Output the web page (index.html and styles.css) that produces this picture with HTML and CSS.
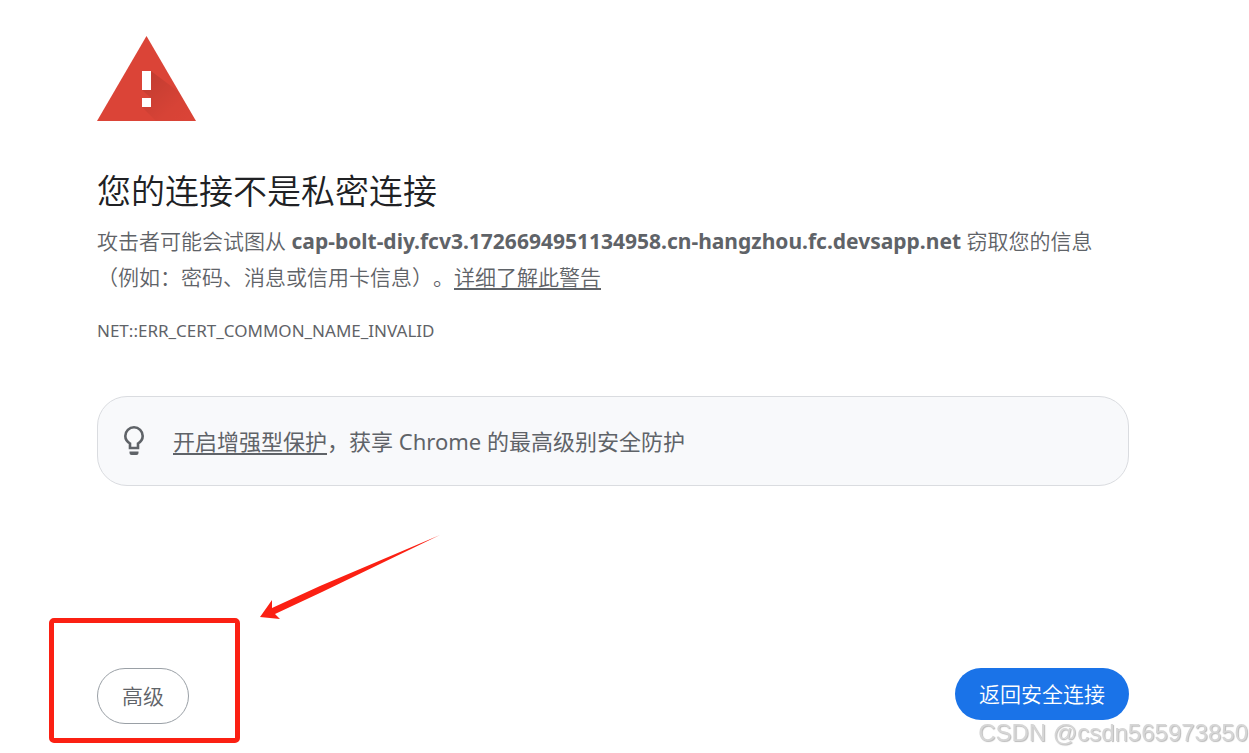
FILE: index.html
```html
<!DOCTYPE html>
<html lang="zh-CN">
<head>
<meta charset="utf-8">
<meta name="viewport" content="width=device-width, initial-scale=1">
<title>隐私设置错误</title>
<link rel="stylesheet" href="styles.css">
</head>
<body>
<main class="page">
  <svg class="warning-icon" viewBox="0 0 100 86" aria-hidden="true">
    <defs>
      <linearGradient id="shade" x1="0" y1="0" x2="1" y2="1">
        <stop offset="0" stop-color="#000" stop-opacity=".13"/>
        <stop offset=".65" stop-color="#000" stop-opacity="0.02"/>
        <stop offset="1" stop-color="#000" stop-opacity="0"/>
      </linearGradient>
    </defs>
    <path fill="#db4437" d="M49.500 0 99 85H0z"/>
    <path fill="url(#shade)" d="M54 35 82 56 99 85H59L45 71h9v-9l-9-8h9z"/>
    <path fill="#fff" d="M45 35h9v19h-9zM45 62h9v9h-9z"/>
  </svg>
  <h1 class="title">您的连接不是私密连接</h1>
  <p class="message">攻击者可能会试图从 <strong>cap-bolt-diy.fcv3.1726694951134958.cn-hangzhou.fc.devsapp.net</strong> 窃取您的信息<br>（例如：密码、消息或信用卡信息）。<a class="link" href="#">详细了解此警告</a></p>
  <p class="error-code">NET::ERR_CERT_COMMON_NAME_INVALID</p>
  <section class="tip">
    <svg class="bulb" viewBox="0 0 24 34" aria-hidden="true">
      <path fill="none" stroke="#5f6368" stroke-width="2.600" d="M8 24v-4.500C4.800 17.500 3.300 15 3.300 12a8.700 8.700 0 0 1 17.400 0c0 3-1.500 5.500-4.700 7.500V24z"/>
      <path fill="#5f6368" d="M7.500 27.500h9v1.500q0 2-2 2h-5q-2 0-2-2z"/>
    </svg>
    <p class="tip-text"><a class="link" href="#">开启增强型保护</a>，获享 Chrome 的最高级别安全防护</p>
  </section>
  <div class="actions">
    <div class="advanced">
      <button class="button button-outline" type="button">高级</button>
      <span class="highlight"></span>
      <svg class="arrow" viewBox="0 0 182 86" aria-hidden="true">
        <path fill="#fb2013" d="M0 82 12 65v8L60 51 180 0 62 57 15 79l5 5z"/>
      </svg>
    </div>
    <button class="button button-primary" type="button">返回安全连接</button>
  </div>
</main>
<div class="watermark">CSDN @csdn565973850</div>
</body>
</html>
```
FILE: styles.css
```css
* { box-sizing: border-box; }
body {
  margin: 0;
  background: #fff;
  color: #5f6368;
  font-family: "Noto Sans", "Noto Sans CJK SC", sans-serif;
  text-spacing-trim: space-all;
}
.page { padding: 36px 120px 29px 97px; }
.warning-icon { display: block; width: 100px; height: 86px; }
.title {
  margin: 47px 0 10px;
  color: #202124;
  font-size: 34px;
  font-weight: 350;
  line-height: 44px;
}
.message { margin: 0; font-size: 21px; font-weight: 350; line-height: 36px; }
.link { color: inherit; text-decoration: underline; text-underline-offset: 3px; }
.error-code { margin: 25px 0 54px; font-size: 17px; line-height: 22px; }
.tip {
  display: flex;
  align-items: center;
  gap: 27px;
  min-height: 90px;
  padding: 0 24px;
  border: 1px solid #dadce0;
  border-radius: 30px;
  background: #f8f9fb;
}
.bulb { flex: none; width: 24px; height: 34px; }
.tip-text { margin: 0; font-size: 22px; line-height: 34px; }
.actions {
  display: flex;
  justify-content: space-between;
  align-items: flex-start;
  margin-top: 182px;
}
.advanced { position: relative; }
.button {
  padding: 0 24px;
  border: 0;
  border-radius: 28px;
  font: inherit;
  font-size: 21px;
  font-weight: 350;
  line-height: 52px;
  cursor: pointer;
}
.button-outline {
  display: block;
  border: 1px solid #9aa0a6;
  background: #fff;
  color: #5f6368;
  line-height: 54px;
}
.button-primary { background: #1a73e8; color: #fff; }
.highlight {
  position: absolute;
  top: -50px;
  left: -48px;
  width: 191px;
  height: 125px;
  border: 5px solid #fb2013;
  border-radius: 5px;
  pointer-events: none;
}
.arrow {
  position: absolute;
  top: -133px;
  left: 163px;
  width: 182px;
  height: 86px;
  pointer-events: none;
}
.watermark {
  position: fixed;
  right: 1px;
  bottom: 6px;
  color: #d6d6d6;
  font-family: "Liberation Sans", sans-serif;
  font-size: 24px;
  line-height: 28px;
  text-shadow: 1px 1px 1px #bbb;
}
```
